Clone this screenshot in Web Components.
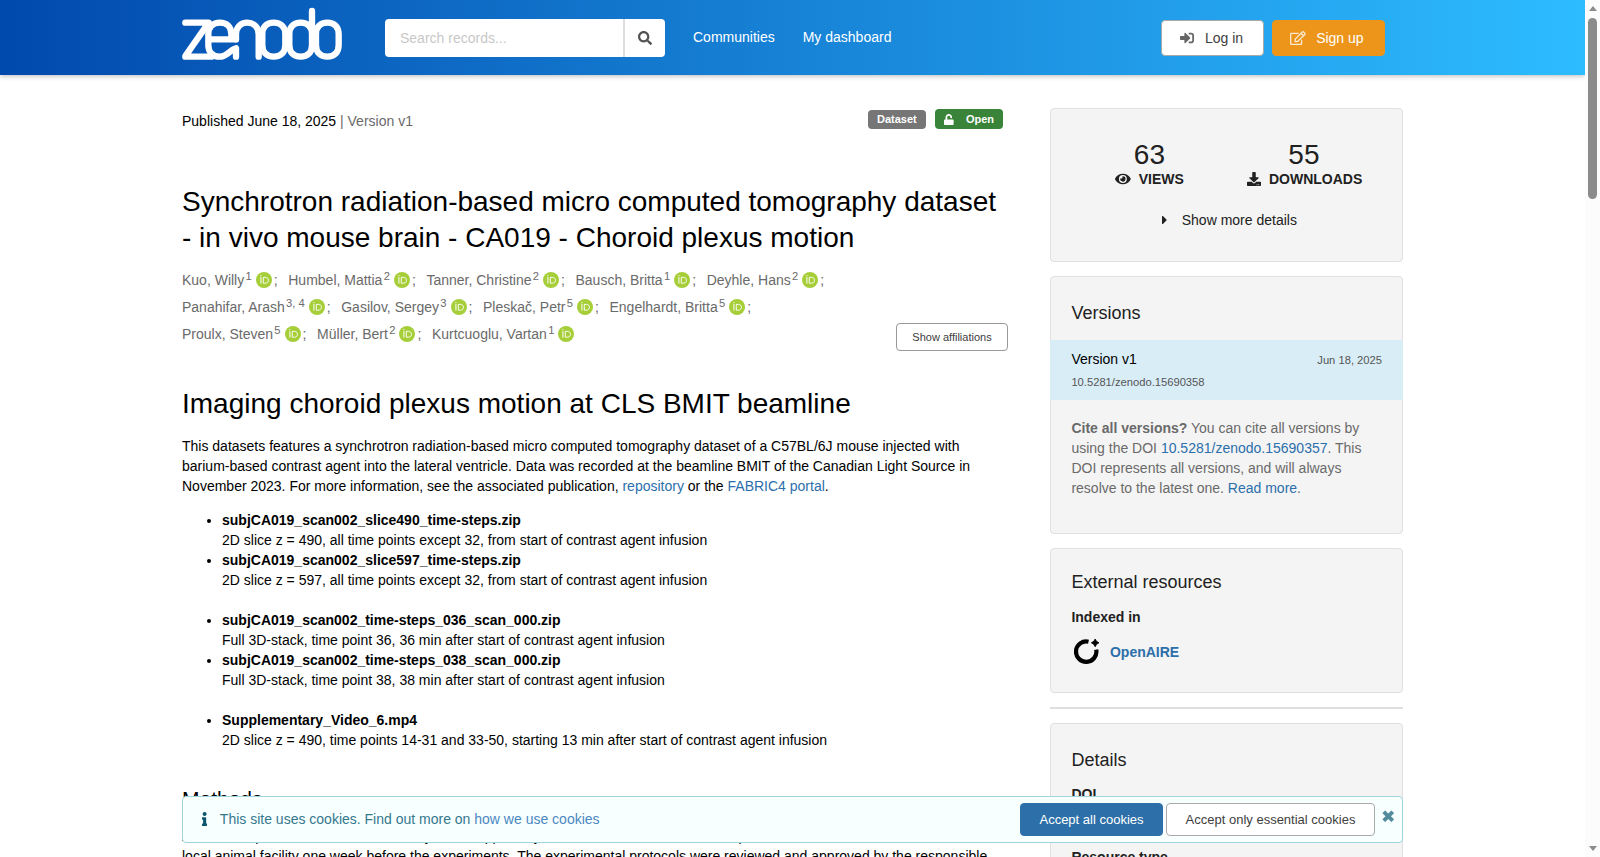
<!DOCTYPE html>
<html lang="en">
<head>
<meta charset="utf-8">
<title>Synchrotron radiation-based micro computed tomography dataset</title>
<style>
    html, body {
        margin: 0;
        height: 100%;
        overflow: hidden;
        background: #fff;
    }
    body {
        font-family: "Liberation Sans", Arial, sans-serif;
        font-size: 14px;
        line-height: 20px;
        color: #000;
    }
</style>
</head>
<body>
<record-page></record-page>

<script>
const define = (name, html) => {
    customElements.define(name, class extends HTMLElement {
        connectedCallback() {
            if (this.shadowRoot) return;
            this.attachShadow({ mode: 'open' });
            this.shadowRoot.innerHTML = typeof html === 'function' ? html(this) : html;
        }
    });
};

const LINK_STYLE = `a { color: #2c6fab; text-decoration: none; }`;

// [viewBox width, path], all on a 512 high grid
const ICONS = {
    search: [512, 'M505 442.7L405.3 343c-4.5-4.5-10.6-7-17-7H372c27.6-35.3 44-79.7 44-128C416 93.1 322.9 0 208 0S0 93.1 0 208s93.1 208 208 208c48.3 0 92.7-16.4 128-44v16.3c0 6.4 2.5 12.5 7 17l99.7 99.7c9.4 9.4 24.6 9.4 33.9 0l28.3-28.3c9.4-9.4 9.4-24.6.1-34zM208 336c-70.7 0-128-57.2-128-128 0-70.7 57.2-128 128-128 70.7 0 128 57.2 128 128 0 70.7-57.2 128-128 128z'],
    signin: [512, 'M416 448h-84c-6.6 0-12-5.4-12-12v-40c0-6.6 5.4-12 12-12h84c17.7 0 32-14.3 32-32V160c0-17.7-14.3-32-32-32h-84c-6.6 0-12-5.4-12-12V76c0-6.6 5.4-12 12-12h84c53 0 96 43 96 96v192c0 53-43 96-96 96zm-47-209L201 71c-15-15-41-4.5-41 17v96H24c-13.3 0-24 10.7-24 24v96c0 13.3 10.7 24 24 24h136v96c0 21.5 26 32 41 17l168-168c9.3-9.4 9.3-24.6 0-34z'],
    edit: [576, 'M402.3 344.9l32-32c5-5 13.7-1.5 13.7 5.7V464c0 26.5-21.5 48-48 48H48c-26.5 0-48-21.5-48-48V112c0-26.5 21.5-48 48-48h273.5c7.1 0 10.7 8.6 5.7 13.7l-32 32c-1.5 1.5-3.5 2.3-5.7 2.3H48v352h352V350.5c0-2.1.8-4.1 2.3-5.6zm156.6-201.8L296.3 405.7l-90.4 10c-26.2 2.9-48.5-19.2-45.6-45.6l10-90.4L432.9 17.1c22.9-22.9 59.9-22.9 82.7 0l43.2 43.2c22.9 22.9 22.9 60 .1 82.8zM460.1 174L402 115.9 216.2 301.8l-7.3 65.3 65.3-7.3L460.1 174zm64.8-79.7l-43.2-43.2c-4.1-4.1-10.8-4.1-14.8 0L436 82l58.1 58.1 30.9-30.9c4-4.2 4-10.8-.1-14.9z'],
    unlock: [448, 'M400 256H152V152.9c0-39.6 31.7-72.5 71.3-72.9 40-.4 72.7 32.1 72.7 72v16c0 13.3 10.7 24 24 24h32c13.3 0 24-10.7 24-24v-16C376 68 307.5-.3 223.5 0 139.5.3 72 69.5 72 153.5V256H48c-26.5 0-48 21.5-48 48v160c0 26.5 21.5 48 48 48h352c26.5 0 48-21.5 48-48V304c0-26.5-21.5-48-48-48z'],
    eye: [576, 'M572.52 241.4C518.29 135.59 410.93 64 288 64S57.68 135.64 3.48 241.41a32.35 32.35 0 0 0 0 29.19C57.71 376.41 165.07 448 288 448s230.32-71.64 284.52-177.41a32.35 32.35 0 0 0 0-29.19zM288 400a144 144 0 1 1 144-144 143.93 143.93 0 0 1-144 144zm0-240a95.31 95.31 0 0 0-25.31 3.79 47.85 47.85 0 0 1-66.9 66.9A95.78 95.78 0 1 0 288 160z'],
    download: [512, 'M216 0h80c13.3 0 24 10.7 24 24v168h87.7c17.8 0 26.7 21.5 14.1 34.1L269.7 378.3c-7.5 7.5-19.8 7.5-27.3 0L90.1 226.1c-12.6-12.6-3.7-34.1 14.1-34.1H192V24c0-13.3 10.7-24 24-24zm296 376v112c0 13.3-10.7 24-24 24H24c-13.3 0-24-10.7-24-24V376c0-13.3 10.7-24 24-24h146.7l49 49c20.1 20.1 52.5 20.1 72.6 0l49-49H488c13.3 0 24 10.7 24 24zm-124 88c0-11-9-20-20-20s-20 9-20 20 9 20 20 20 20-9 20-20zm64 0c0-11-9-20-20-20s-20 9-20 20 9 20 20 20 20-9 20-20z'],
    caret: [192, 'M0 384.662V127.338c0-17.818 21.543-26.741 34.142-14.142l128.662 128.662c7.81 7.81 7.81 20.474 0 28.284L34.142 398.804C21.543 411.404 0 402.48 0 384.662z'],
    info: [192, 'M20 424.229h20V279.771H20c-11.046 0-20-8.954-20-20V212c0-11.046 8.954-20 20-20h112c11.046 0 20 8.954 20 20v212.229h20c11.046 0 20 8.954 20 20V492c0 11.046-8.954 20-20 20H20c-11.046 0-20-8.954-20-20v-47.771c0-11.046 8.954-20 20-20zM96 0C56.235 0 24 32.235 24 72s32.235 72 72 72 72-32.235 72-72S135.764 0 96 0z'],
    close: [512, 'M141 30L256 145 371 30Q384 18 397 30L482 115Q494 128 482 141L367 256 482 371Q494 384 482 397L397 482Q384 494 371 482L256 367 141 482Q128 494 115 482L30 397Q18 384 30 371L145 256 30 141Q18 128 30 115L115 30Q128 18 141 30z']
};

define('ui-icon', el => {
    const [width, path] = ICONS[el.getAttribute('name')];
    const size = parseFloat(el.getAttribute('size')) || 14;
    return `
        <style>
            :host { display: inline-flex; flex: none; }
            svg { display: block; fill: currentColor; }
        </style>
        <svg width="${width / 512 * size}" height="${size}" viewBox="0 0 ${width} 512"><path d="${path}"/></svg>
    `;
});

define('orcid-icon', `
    <style>
        :host { display: inline-block; width: 16px; height: 16px; vertical-align: middle; }
        svg { display: block; }
    </style>
    <svg width="16" height="16" viewBox="0 0 256 256">
        <circle cx="128" cy="128" r="128" fill="#a6ce39"/>
        <rect x="70.9" y="79" width="15.4" height="107" fill="#fff"/>
        <circle cx="78.6" cy="56.8" r="10.1" fill="#fff"/>
        <path d="M116.6 86H150c34 0 49.5 24 49.5 46.6 0 24-18 46.6-49.5 46.6h-33.4z" fill="none" stroke="#fff" stroke-width="15"/>
    </svg>
`);

define('openaire-icon', `
    <style>
        :host { display: inline-flex; }
        svg { display: block; }
    </style>
    <svg width="25" height="25" viewBox="0 0 25 25">
        <path d="M14.5 2.7A10.2 10.2 0 1 0 22.2 10.6" fill="none" stroke="#000" stroke-width="4.2"/>
        <path d="M21.2 0Q22 3 25 3.8 22 4.8 21.2 7.8 20.2 4.8 17.3 3.8 20.2 3 21.2 0z" stroke="#000" stroke-width=".8"/>
    </svg>
`);

define('zenodo-logo', `
    <style>
        :host { display: block; }
        svg { display: block; fill: none; stroke: #fff; stroke-width: 19; stroke-linecap: round; stroke-linejoin: round; overflow: visible; }
    </style>
    <svg width="160" height="53" viewBox="18 16 480 159">
        <path d="M28 63H98L29 162M28 165H106"/>
        <path d="M180 113H97M166 113V97C166 74 151 63 132 63 111 63 97 76 97 98V130C97 151 110 165 131 165 153 165 158 147 180 140V165"/>
        <path d="M180 113V98C180 77 194 63 214 63 234 63 248 77 248 98V165"/>
        <path d="M259 98C259 76 272 63 293 63S328 76 328 98V130C328 152 314 165 293 165S259 152 259 130z"/>
        <path d="M340 98C340 76 353 63 374 63S408 76 408 98V130C408 152 395 165 374 165S340 152 340 130zM408 28V98"/>
        <path d="M420 98C420 76 433 63 454 63S488 76 488 98V130C488 152 475 165 454 165S420 152 420 130z"/>
    </svg>
`);

define('ui-button', `
    <style>
        :host {
            display: inline-flex;
            align-items: center;
            justify-content: center;
            box-sizing: border-box;
            height: 36px;
            border: 1px solid #a9a9a9;
            border-radius: 4px;
            background: #fff;
            color: #404040;
            white-space: nowrap;
        }
        :host([kind="signup"]) { background: #ed951b; border-color: #ed951b; color: #fff; }
        :host([kind="primary"]) { background: #2d6fa8; border-color: #2d6fa8; color: #fff; }
    </style>
    <slot></slot>
`);

define('site-header', `
    <style>
        :host {
            display: block;
            height: 75px;
            background: linear-gradient(90deg, #0149ad, #2dbcff);
            box-shadow: 0 1px 5px rgba(0, 0, 0, .28);
        }
        .bar {
            width: 1221px;
            height: 75px;
            margin: 0 auto;
            display: flex;
        }
        zenodo-logo { margin-top: 7px; }
        .search {
            display: flex;
            box-sizing: border-box;
            width: 280px;
            height: 38px;
            margin: 19px 0 0 43px;
            background: #fff;
            border-radius: 4px;
        }
        .field {
            width: 240px;
            box-sizing: border-box;
            padding: 9px 15px;
            color: #c8c8c8;
            border-right: 2px solid #dededf;
        }
        .go { flex: 1; display: flex; align-items: center; justify-content: center; color: #404040; }
        nav { display: flex; gap: 28px; margin: 27px 0 0 28px; color: #fff; }
        .account { display: flex; gap: 8px; margin: 20px 18px 0 auto; }
        .account ui-button:first-child { width: 103px; gap: 11px; padding-right: 2px; }
        .account ui-button:last-child { width: 113px; gap: 10px; padding-right: 3px; }
        ui-icon { opacity: .9; }
        .account ui-icon { opacity: .8; }
    </style>
    <div class="bar">
        <zenodo-logo></zenodo-logo>
        <div class="search">
            <div class="field">Search records...</div>
            <div class="go"><ui-icon name="search"></ui-icon></div>
        </div>
        <nav><span>Communities</span><span>My dashboard</span></nav>
        <div class="account">
            <ui-button><ui-icon name="signin"></ui-icon>Log in</ui-button>
            <ui-button kind="signup"><ui-icon name="edit"></ui-icon>Sign up</ui-button>
        </div>
    </div>
`);

define('ui-label', `
    <style>
        :host {
            display: flex;
            align-items: center;
            box-sizing: border-box;
            height: 19px;
            padding: 0 9px 1px;
            border-radius: 4px;
            background: #767676;
            color: #fff;
            font-size: 11px;
            font-weight: bold;
        }
        :host(:not([kind])) { padding-right: 9.5px; }
        :host([kind="open"]) { height: 20px; padding-bottom: 0; background: #3a843a; }
    </style>
    <slot></slot>
`);

define('record-creator', el => `
    <style>
        :host { display: inline-block; margin-right: 10.6px; white-space: nowrap; }
        sup { font-size: 11.2px; line-height: 0; vertical-align: 5px; margin: 0 4px 0 1.3px; }
        orcid-icon { margin-top: -3px; }
        .sep { margin-left: 2px; }
    </style>
    <slot></slot><sup>${el.getAttribute('ref')}</sup><orcid-icon></orcid-icon>${el.hasAttribute('last') ? '' : '<span class="sep">;</span>'}
`);

const CREATORS = [
    [['Kuo, Willy', '1'], ['Humbel, Mattia', '2'], ['Tanner, Christine', '2'], ['Bausch, Britta', '1'], ['Deyhle, Hans', '2']],
    [['Panahifar, Arash', '3, 4'], ['Gasilov, Sergey', '3'], ['Pleskač, Petr', '5'], ['Engelhardt, Britta', '5']],
    [['Proulx, Steven', '5'], ['Müller, Bert', '2'], ['Kurtcuoglu, Vartan', '1']]
];

define('creator-list', `
    <style>
        :host { display: block; color: #6a6a6a; }
        .row { display: flex; height: 27px; line-height: 27px; }
        .row ui-button {
            width: 112px;
            height: 28px;
            margin: 2px 0 0 auto;
            border-color: #999;
            font-size: 11px;
        }
    </style>
    ${CREATORS.map((row, r) => `
        <div class="row">
            ${row.map(([name, ref], i) => `<record-creator ref="${ref}"${r === 2 && i === 2 ? ' last' : ''}>${name}</record-creator>`).join('')}
            ${r === 2 ? '<ui-button>Show affiliations</ui-button>' : ''}
        </div>
    `).join('')}
`);

const FILES = [
    ['subjCA019_scan002_slice490_time-steps.zip', '2D slice z = 490, all time points except 32, from start of contrast agent infusion'],
    ['subjCA019_scan002_slice597_time-steps.zip', '2D slice z = 597, all time points except 32, from start of contrast agent infusion', true],
    ['subjCA019_scan002_time-steps_036_scan_000.zip', 'Full 3D-stack, time point 36, 36 min after start of contrast agent infusion'],
    ['subjCA019_scan002_time-steps_038_scan_000.zip', 'Full 3D-stack, time point 38, 38 min after start of contrast agent infusion', true],
    ['Supplementary_Video_6.mp4', '2D slice z = 490, time points 14-31 and 33-50, starting 13 min after start of contrast agent infusion']
];

define('record-description', `
    <style>
        :host { display: block; }
        ${LINK_STYLE}
        h1 { margin: 0; font-size: 28px; font-weight: normal; line-height: 36px; }
        h2 { margin: 0; font-size: 21px; font-weight: normal; line-height: 27px; }
        p { margin: 14px 0; white-space: nowrap; }
        ul { margin: 14px 0 35px; padding-left: 40px; }
        li.gap { margin-bottom: 20px; }
    </style>
    <h1>Imaging choroid plexus motion at CLS BMIT beamline</h1>
    <p>This datasets features a synchrotron radiation-based micro computed tomography dataset of a C57BL/6J mouse injected with<br>
    barium-based contrast agent into the lateral ventricle. Data was recorded at the beamline BMIT of the Canadian Light Source in<br>
    November 2023. For more information, see the associated publication, <a>repository</a> or the <a>FABRIC4 portal</a>.</p>
    <ul>
        ${FILES.map(([name, text, gap]) => `<li${gap ? ' class="gap"' : ''}><b>${name}</b><br>${text}</li>`).join('')}
    </ul>
    <h2>Methods</h2>
    <p>All of the experimental mice in this study were supplied by the vendor and were then transported to the<br>
    local animal facility one week before the experiments. The experimental protocols were reviewed and approved by the responsible</p>
`);

define('record-main', `
    <style>
        :host { display: block; width: 826px; padding-top: 34px; }
        .meta { display: flex; height: 20px; }
        .date { margin: 2px auto 0 0; }
        .date span { color: #6a6a6a; }
        .labels { display: flex; align-items: flex-end; gap: 9px; margin-right: 5px; }
        ui-icon { margin-right: 12px; }
        h1 { margin: 55px 0 11px; font-size: 28px; font-weight: normal; line-height: 36px; }
        record-description { margin-top: 38px; }
    </style>
    <div class="meta">
        <div class="date">Published June 18, 2025 <span>| Version v1</span></div>
        <div class="labels">
            <ui-label>Dataset</ui-label>
            <ui-label kind="open"><ui-icon name="unlock" size="11"></ui-icon>Open</ui-label>
        </div>
    </div>
    <h1>Synchrotron radiation-based micro computed tomography dataset - in vivo mouse brain - CA019 - Choroid plexus motion</h1>
    <creator-list></creator-list>
    <record-description></record-description>
`);

define('side-card', el => `
    <style>
        :host {
            display: block;
            box-sizing: border-box;
            padding: 25px 20px 0 20.4px;
            border: 1px solid #e0e0e0;
            border-radius: 4px;
            background: #f4f4f4;
            color: #212121;
        }
        h2 { margin: 0; font-size: 18px; font-weight: normal; line-height: 23px; }
    </style>
    ${el.hasAttribute('heading') ? `<h2>${el.getAttribute('heading')}</h2>` : ''}
    <slot></slot>
`);

define('record-stats', `
    <style>
        :host { display: block; }
        .grid { display: grid; grid-template-columns: 154px 155px; margin: 5px 0 0 1px; text-align: center; }
        .num { font-size: 28px; line-height: 31px; padding-top: .4px; }
        .cap { display: flex; justify-content: center; align-items: center; gap: 8px; font-weight: bold; height: 17px; }
        .downloads { padding-left: 1.4px; }
        .more { display: flex; justify-content: center; align-items: center; gap: 14px; margin-top: 22.6px; padding-left: 6px; }
    </style>
    <div class="grid">
        <div><div class="num">63</div><div class="cap"><ui-icon name="eye"></ui-icon>VIEWS</div></div>
        <div><div class="num">55</div><div class="cap downloads"><ui-icon name="download"></ui-icon>DOWNLOADS</div></div>
    </div>
    <div class="more"><ui-icon name="caret"></ui-icon>Show more details</div>
`);

define('record-versions', `
    <style>
        :host { display: block; }
        ${LINK_STYLE}
        .current {
            display: flex;
            flex-direction: column;
            box-sizing: border-box;
            height: 60px;
            margin: 15px -21px 18px -21.4px;
            padding: 9px 21px 0 21.4px;
            background: #d9edf7;
        }
        .row { display: flex; justify-content: space-between; height: 22px; }
        .name { color: #000; }
        .small { font-size: 11.2px; color: #555; line-height: 22px; }
        p { margin: 0; color: #6a6a6a; }
    </style>
    <div class="current">
        <div class="row"><span class="name">Version v1</span><span class="small">Jun 18, 2025</span></div>
        <span class="small">10.5281/zenodo.15690358</span>
    </div>
    <p><b>Cite all versions?</b> You can cite all versions by using the DOI <a>10.5281/zenodo.15690357</a>. This DOI represents all versions, and will always resolve to the latest one. <a>Read more</a>.</p>
`);

define('record-sidebar', `
    <style>
        :host { display: block; width: 353px; padding-top: 33px; }
        ${LINK_STYLE}
        side-card { margin-bottom: 14px; }
        .stats { height: 154px; }
        .versions { height: 258px; }
        .external { height: 145px; padding-top: 22px; }
        .details { height: 300px; }
        b { display: block; }
        .external b { margin-top: 13px; }
        .index { display: flex; align-items: center; gap: 10.6px; margin: 12px 0 0 3px; font-weight: bold; }
        .rule { height: 2px; margin-bottom: 14px; background: #e0e0e0; }
        .details b { margin: 12px 0 43px; }
    </style>
    <side-card class="stats"><record-stats></record-stats></side-card>
    <side-card class="versions" heading="Versions"><record-versions></record-versions></side-card>
    <side-card class="external" heading="External resources">
        <b>Indexed in</b>
        <div class="index"><openaire-icon></openaire-icon><a>OpenAIRE</a></div>
    </side-card>
    <div class="rule"></div>
    <side-card class="details" heading="Details"><b>DOI</b><b>Resource type</b></side-card>
`);

define('cookie-banner', `
    <style>
        :host {
            display: flex;
            align-items: center;
            box-sizing: border-box;
            height: 47px;
            border: 1px solid #a3d4dd;
            border-radius: 4px;
            background: #f8ffff;
            color: #34788d;
            padding-left: 19px;
        }
        a { color: #4a88c2; }
        span { margin-top: -1px; }
        ui-icon[name="info"] { margin: -2px 12.6px 0 0; color: #0e566c; }
        .buttons { display: flex; gap: 3px; margin-left: auto; font-size: 13px; }
        ui-button { height: 33px; width: 209px; }
        ui-button[kind] { width: 143px; }
        ui-icon[name="close"] { margin: -6px 8px 0 6.5px; color: #528b9b; }
    </style>
    <ui-icon name="info"></ui-icon>
    <span>This site uses cookies. Find out more on <a>how we use cookies</a></span>
    <div class="buttons">
        <ui-button kind="primary">Accept all cookies</ui-button>
        <ui-button>Accept only essential cookies</ui-button>
    </div>
    <ui-icon name="close" size="12.5"></ui-icon>
`);

define('page-scrollbar', `
    <style>
        :host {
            display: flex;
            flex-direction: column;
            align-items: center;
            box-sizing: border-box;
            width: 15px;
            padding: 6px 0;
            background: #fcfcfc;
        }
        .up, .down { border: 4.5px solid transparent; border-top: 0; border-bottom: 5px solid #8b8b8b; }
        .down { border-bottom: 0; border-top: 5px solid #8b8b8b; margin-top: auto; }
        .thumb { width: 9px; height: 181px; margin-top: 7px; border-radius: 5px; background: #8b8b8b; }
    </style>
    <div class="up"></div><div class="thumb"></div><div class="down"></div>
`);

define('record-page', `
    <style>
        :host { display: grid; grid-template-columns: 1fr 15px; height: 100vh; overflow: hidden; }
        .view { position: relative; height: 100vh; overflow: hidden; }
        .columns { display: flex; justify-content: space-between; width: 1221px; margin: 0 auto; }
        /* floats over the page content */
        cookie-banner { position: absolute; left: 182px; right: 182px; bottom: 14px; }
    </style>
    <div class="view">
        <site-header></site-header>
        <div class="columns">
            <record-main></record-main>
            <record-sidebar></record-sidebar>
        </div>
        <cookie-banner></cookie-banner>
    </div>
    <page-scrollbar></page-scrollbar>
`);
</script>
</body>
</html>
